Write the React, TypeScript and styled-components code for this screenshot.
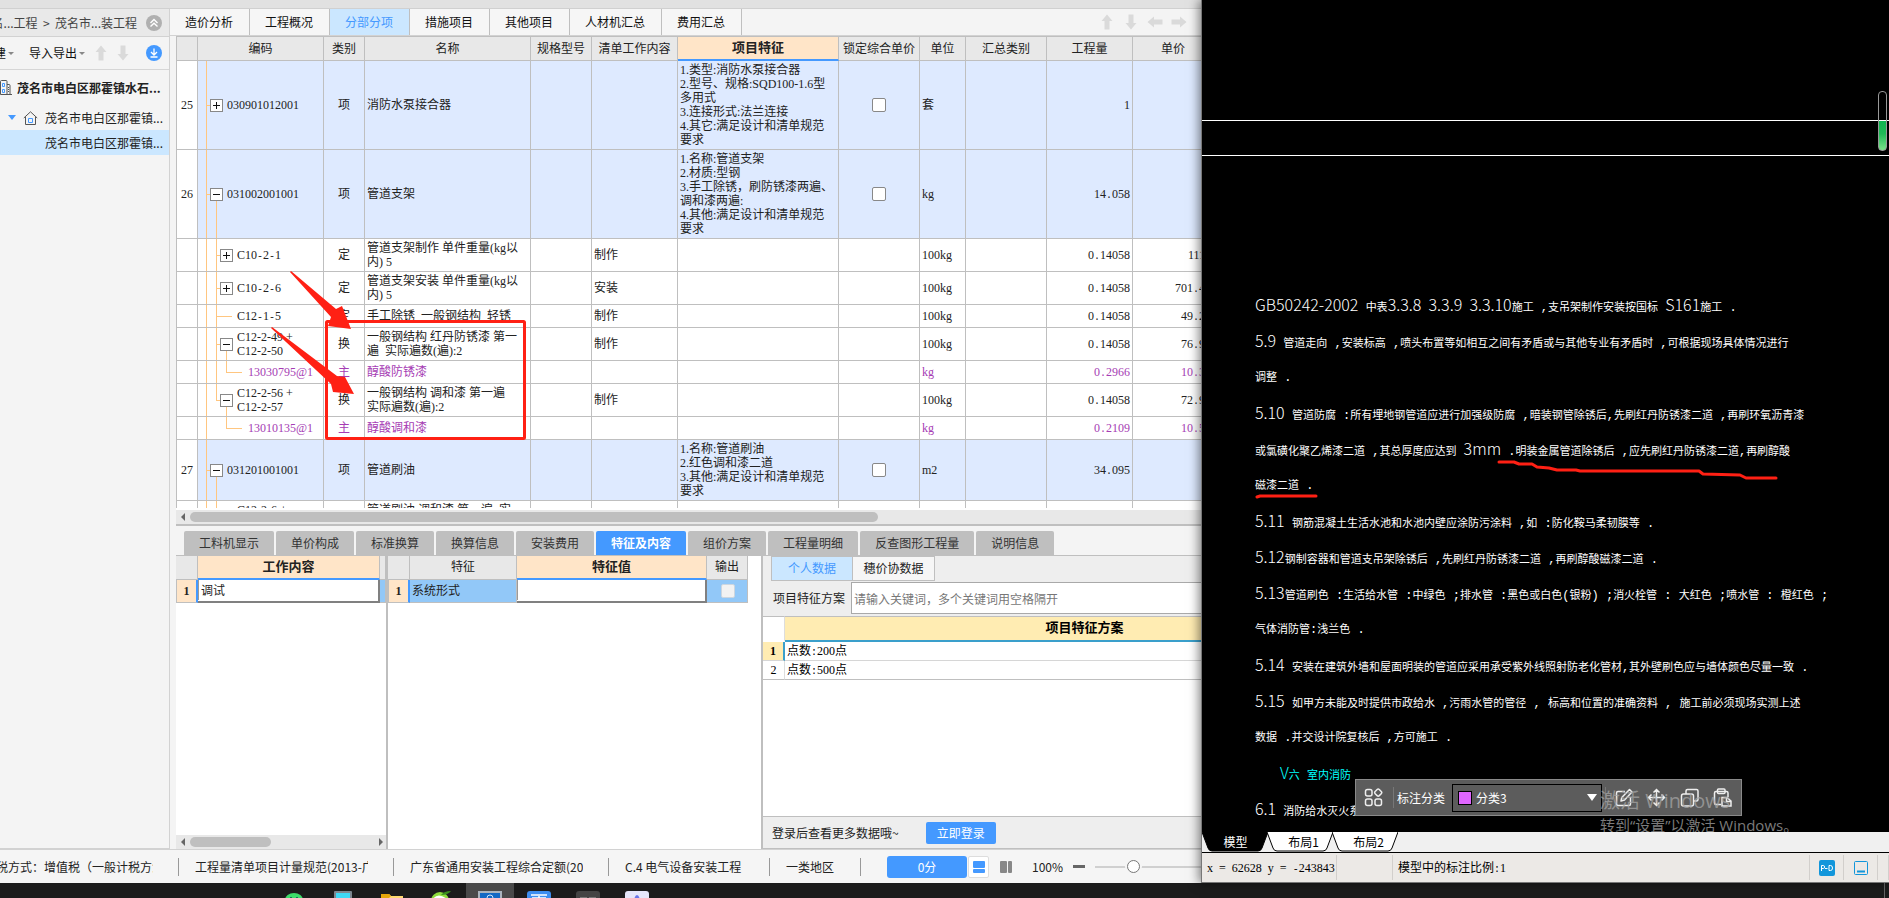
import React from "react";
import styled, { createGlobalStyle, css } from "styled-components";

const Global = createGlobalStyle`
  * { box-sizing: border-box; }
  html, body { margin: 0; height: 100%; overflow: hidden; }
  body { font: 12px/16px "Noto Sans CJK SC", sans-serif; color: #222; background: #1c1c1c; }
  #root { height: 100%; }
  button, input, select { font: inherit; color: inherit; margin: 0; padding: 0; border: 0; background: none; border-radius: 0; }
`;

const line = "#bfbfbf";
const blue = "#4499ff";
const gridFont = `12px/14px "Liberation Serif", "Noto Sans CJK SC", serif`;

const Screen = styled.div`
  height: 100vh;
  display: flex;
  flex-direction: column;
  overflow: hidden;
`;
const Windows = styled.div`
  flex: 1;
  min-height: 0;
  display: grid;
  grid-template-columns: minmax(0, 1201fr) minmax(0, 688fr);
`;

/* ---------- pricing application ---------- */
const AppWindow = styled.div`
  display: flex;
  flex-direction: column;
  min-height: 0;
  overflow: hidden;
  background: #f4f4f4;
`;
const TitleStrip = styled.div`
  flex: none;
  height: 9px;
  background: #e1e1e1;
  border-bottom: 1px solid #d0d0d0;
`;
const AppBody = styled.div`
  flex: 1;
  min-height: 0;
  display: flex;
`;

const Sidebar = styled.aside`
  flex: none;
  width: 170px;
  border-right: 1px solid #d2d2d2;
  border-bottom: 1px solid #d2d2d2;
  white-space: nowrap;
  overflow: hidden;
`;
const Crumbs = styled.nav`
  display: flex;
  align-items: center;
  justify-content: flex-end;
  height: 28px;
  padding: 0 7px 0 0;
  gap: 9px;
  background: #e9e9e9;
  border-bottom: 1px solid #d2d2d2;
  color: #444;
  span, svg { flex: none; }
`;
const SideTools = styled.div`
  display: flex;
  align-items: center;
  justify-content: flex-end;
  height: 33px;
  padding-right: 7px;
  border-bottom: 1px solid #d6d6d6;
  color: #111;
`;
const ToolButton = styled.button<{ $gap?: number }>`
  display: flex;
  flex: none;
  align-items: center;
  gap: 2px;
  margin-right: ${(p) => p.$gap ?? 0}px;
`;
const Caret = styled.span`
  border: 3px solid transparent;
  border-top-color: #888;
  border-bottom: 0;
`;
const TreeItem = styled.div<{ $pad: number; $top?: boolean; $on?: boolean }>`
  display: flex;
  align-items: center;
  gap: ${(p) => (p.$top ? 5 : 7)}px;
  height: ${(p) => (p.$top ? 35 : 25)}px;
  padding-left: ${(p) => p.$pad}px;
  font-weight: ${(p) => (p.$top ? 600 : 400)};
  background: ${(p) => (p.$on ? "#cbe7ff" : "transparent")};
`;
const Expander = styled.span`
  border: 4px solid transparent;
  border-top: 5px solid ${blue};
  border-bottom: 0;
`;

const Main = styled.main`
  flex: 1;
  min-width: 0;
  display: flex;
  flex-direction: column;
`;
const TopTabs = styled.div`
  flex: none;
  display: flex;
  height: 27px;
  border-bottom: 1px solid #d2d2d2;
`;
const TopTab = styled.button<{ $on?: boolean }>`
  padding: 0 16px 0 15px;
  border-right: 1px solid ${line};
  color: ${(p) => (p.$on ? blue : "#111")};
  background: ${(p) => (p.$on ? "#cbe7ff" : "#f6f6f6")};
`;
const MoveTools = styled.div`
  display: flex;
  align-items: center;
  gap: 8px;
  margin-left: auto;
  padding-right: 14px;
`;
const Workspace = styled.div`
  flex: 1;
  min-height: 0;
  display: flex;
  flex-direction: column;
  padding-left: 6px;
`;
const Upper = styled.section`
  flex: 489 1 0;
  min-height: 0;
  display: flex;
  flex-direction: column;
  position: relative;
  border-bottom: 2px solid ${line};
`;
const SheetView = styled.div`
  flex: 1;
  min-height: 0;
  overflow: hidden;
  background: #fff;
  border-bottom: 2px solid #fff;
`;
const Sheet = styled.table`
  width: 1038px;
  table-layout: fixed;
  border-collapse: separate;
  border-spacing: 0;
  border-left: 1px solid ${line};
  border-top: 1px solid ${line};
  font: ${gridFont};
`;
const Th = styled.th<{ $on?: boolean }>`
  height: 24px;
  padding: 0;
  white-space: nowrap;
  overflow: hidden;
  border-right: 1px solid ${line};
  border-bottom: ${(p) => (p.$on ? `2px solid ${blue}` : `1px solid ${line}`)};
  background: ${(p) => (p.$on ? "#ffe5c8" : "#e8e8e8")};
  font-weight: ${(p) => (p.$on ? 700 : 400)};
  font-size: ${(p) => (p.$on ? 13 : 12)}px;
`;
type Tone = "group" | "plain" | "material";
const Row = styled.tr<{ $h: number; $tone: Tone }>`
  height: ${(p) => p.$h}px;
  color: ${(p) => (p.$tone === "material" ? "#a63cb4" : "#222")};
  background: ${(p) => (p.$tone === "group" ? "#deeaff" : "#fff")};
`;
const Td = styled.td<{ $align?: string; $num?: boolean; $end?: number }>`
  position: relative;
  padding: 0 ${(p) => p.$end ?? 2}px 0 ${(p) => (p.$align ? 0 : 2)}px;
  border-right: 1px solid ${line};
  border-bottom: 1px solid ${line};
  white-space: pre;
  overflow: hidden;
  text-align: ${(p) => p.$align ?? "left"};
  ${(p) => p.$num && css`background: #fff;`}
`;
const CodeCell = styled.div<{ $pad: number }>`
  display: flex;
  align-items: center;
  gap: 4px;
  margin-left: -2px;
  padding-left: ${(p) => p.$pad}px;
`;
const Toggle = styled.button`
  position: relative;
  flex: none;
  width: 13px;
  height: 13px;
  background: #fff;
  border: 1px solid #888;
  svg { display: block; }
`;
const guide = "#ffc680";
const Guide = styled.i<{ $x: number; $part: "full" | "top" | "bottom" }>`
  position: absolute;
  left: ${(p) => p.$x}px;
  width: 1px;
  background: ${guide};
  top: ${(p) => (p.$part === "bottom" ? "calc(50% + 7px)" : "0")};
  bottom: ${(p) => (p.$part === "top" ? "50%" : "-1px")};
`;
const Stub = styled.i<{ $x: number; $w: number }>`
  position: absolute;
  left: ${(p) => p.$x}px;
  width: ${(p) => p.$w}px;
  top: 50%;
  height: 1px;
  background: ${guide};
`;
const Check = styled.input<{ $soft?: boolean }>`
  appearance: none;
  display: block;
  width: 14px;
  height: 14px;
  margin: 0 auto;
  background: ${(p) => (p.$soft ? "#f2f2f2" : "#fff")};
  border: 1px solid ${(p) => (p.$soft ? "#ccd6e0" : "#888")};
  border-radius: 2px;
`;
const Scroll = styled.div`
  flex: none;
  display: flex;
  align-items: center;
  height: 14px;
  padding: 0 3px 0 5px;
  background: #e8e8e8;
`;
const Thumb = styled.div<{ $w: string }>`
  width: ${(p) => p.$w};
  height: 10px;
  margin: 0 auto 0 5px;
  border-radius: 5px;
  background: ${line};
`;
const ScrollEnd = styled.span<{ $right?: boolean }>`
  border: 4px solid transparent;
  ${(p) =>
    p.$right
      ? css`border-left-color: #666; border-right: 0;`
      : css`border-right-color: #666; border-left: 0;`}
`;
const Marks = styled.svg`
  position: absolute;
  top: 0;
  left: 0;
  pointer-events: none;
`;

const Lower = styled.section`
  flex: 324 1 0;
  min-height: 0;
  display: flex;
  flex-direction: column;
`;
const DetailTabs = styled.div`
  flex: none;
  display: flex;
  gap: 2px;
  height: 30px;
  padding: 5px 0 0 8px;
  border-bottom: 1px solid ${line};
`;
const DetailTab = styled.button<{ $on?: boolean }>`
  flex: none;
  padding: 0 15px;
  border-radius: 2px 2px 0 0;
  background: ${(p) => (p.$on ? blue : line)};
  color: ${(p) => (p.$on ? "#fff" : "#333")};
  font-weight: ${(p) => (p.$on ? 600 : 400)};
`;
const Panels = styled.div`
  flex: 1;
  min-height: 0;
  display: flex;
`;
const Panel = styled.div<{ $w?: number }>`
  flex: ${(p) => (p.$w ? `0 0 ${p.$w}px` : "1 1 0")};
  min-width: 0;
  display: flex;
  flex-direction: column;
  overflow: hidden;
  background: ${(p) => (p.$w ? "#fff" : "#eee")};
  border-right: ${(p) => (p.$w ? `2px solid ${line}` : "0")};
`;
const MiniTable = styled.table<{ $w?: number }>`
  width: ${(p) => (p.$w ? `${p.$w}px` : "100%")};
  table-layout: fixed;
  border-collapse: separate;
  border-spacing: 0;
  font: ${gridFont};
`;
const MiniTd = styled.td<{ $kind?: "num" | "edit" | "sel" }>`
  height: 23px;
  padding: 0 0 0 2px;
  border-right: 1px solid ${line};
  border-bottom: 1px solid ${line};
  ${(p) => p.$kind === "sel" && css`background: #92c8f8;`}
  ${(p) =>
    p.$kind === "num" &&
    css`
      background: #ffe5c8;
      border-right: 2px solid ${blue};
      border-left: 1px solid ${line};
      text-align: center;
      font-weight: 700;
      padding: 0;
    `}
  ${(p) =>
    p.$kind === "edit" &&
    css`
      padding: 0;
      background: #fff;
      border-right: 2px solid #808080;
      border-bottom: 2px solid #808080;
    `}
`;
const CellInput = styled.input`
  display: block;
  width: 100%;
  height: 20px;
  padding: 0 2px;
  border-left: 1px solid #9a9a9a;
`;
const Spacer = styled.div`
  flex: 1;
  background: #fff;
`;
const SubTabs = styled.div`
  display: flex;
  padding: 0 0 0 8px;
  height: 25px;
`;
const SubTab = styled.button<{ $on?: boolean }>`
  width: 82px;
  border: 1px solid ${line};
  border-left-width: ${(p) => (p.$on ? 1 : 0)}px;
  background: ${(p) => (p.$on ? "#cbe7ff" : "#f6f6f6")};
  color: ${(p) => (p.$on ? blue : "#222")};
`;
const SearchRow = styled.label`
  display: flex;
  align-items: center;
  gap: 6px;
  height: 35px;
  padding-left: 10px;
  white-space: nowrap;
`;
const SearchInput = styled.input`
  flex: 1;
  min-width: 0;
  height: 32px;
  padding: 0 2px;
  background: #fff;
  border: 1px solid #a9a9a9;
  border-right: 0;
  &::placeholder { color: #777; opacity: 1; }
`;
const SchemeHead = styled.th<{ $blank?: boolean }>`
  height: 26px;
  padding: 0;
  border-top: 1px solid ${line};
  border-bottom: 2px solid ${(p) => (p.$blank ? "#fff" : "#3a9fcb")};
  border-right: 1px solid #ddd;
  background: ${(p) => (p.$blank ? "#fff" : "#ffecb2")};
  color: #000;
  font-size: 13px;
`;
const SchemeTd = styled.td<{ $num?: boolean; $on?: boolean }>`
  height: 19px;
  padding: 0 2px;
  color: #000;
  background: ${(p) => (p.$num && p.$on ? "#ffecb2" : "#fff")};
  border-bottom: 1px solid ${(p) => (p.$on ? "#d6d6d6" : line)};
  text-align: ${(p) => (p.$num ? "center" : "left")};
  border-right: ${(p) => (p.$num ? (p.$on ? "2px solid #3a9fcb" : "1px solid #ddd") : "0")};
  font-weight: ${(p) => (p.$num && p.$on ? 700 : 400)};
`;
const LoginBar = styled.div`
  display: flex;
  align-items: center;
  gap: 27px;
  height: 33px;
  padding: 0 0 0 9px;
  border-top: 1px solid ${line};
  border-bottom: 1px solid ${line};
`;
const LoginButton = styled.button`
  width: 70px;
  height: 22px;
  border-radius: 2px;
  background: ${blue};
  color: #fff;
`;

const StatusBar = styled.footer`
  flex: none;
  display: flex;
  align-items: center;
  height: 34px;
  border-top: 1px solid #d2d2d2;
  background: #f5f5f5;
  overflow: hidden;
  white-space: nowrap;
`;
const StatusItem = styled.div<{ $w: number; $first?: boolean }>`
  flex: none;
  width: ${(p) => p.$w}px;
  height: 18px;
  line-height: 18px;
  padding: 0 25px 0 ${(p) => (p.$first ? 0 : 16)}px;
  text-indent: ${(p) => (p.$first ? -4 : 0)}px;
  border-right: 1px solid #999;
  span { display: block; overflow: hidden; }
`;
const ScoreButton = styled.button`
  flex: none;
  width: 80px;
  height: 22px;
  margin-left: 26px;
  border-radius: 3px;
  background: ${blue};
  color: #fff;
`;
const ViewButton = styled.button<{ $on?: boolean }>`
  flex: none;
  display: flex;
  align-items: center;
  justify-content: center;
  width: 21px;
  height: 22px;
  margin: 0 5px 0 1px;
  border: 1px solid ${(p) => (p.$on ? "#ddd" : "transparent")};
  background: ${(p) => (p.$on ? "#fff" : "transparent")};
  border-radius: 2px;
`;
const Zoom = styled.div`
  display: flex;
  flex: none;
  align-items: center;
  gap: 10px;
  padding-left: 11px;
  button { width: 12px; height: 3px; background: #666; }
`;
const Slider = styled.input`
  appearance: none;
  width: 120px;
  height: 14px;
  background: linear-gradient(#d0d0d0, #d0d0d0) center / 100% 2px no-repeat;
  &::-webkit-slider-thumb {
    appearance: none;
    width: 13px;
    height: 13px;
    border-radius: 50%;
    background: #fff;
    border: 1px solid #777;
    box-shadow: 0 0 0 2px #f5f5f5;
  }
`;

/* ---------- drawing application ---------- */
const CadWindow = styled.div`
  position: relative;
  display: flex;
  flex-direction: column;
  min-height: 0;
  border-left: 1px solid #777;
  background: #000;
  box-shadow: -2px 0 10px rgba(0, 0, 0, 0.5);
`;
const Drawing = styled.div`
  position: relative;
  flex: 1;
  min-height: 0;
  overflow: hidden;
  color: #fff;
`;
const Rule = styled.div<{ $gap: number }>`
  height: 1px;
  margin-top: ${(p) => p.$gap}px;
  background: #fff;
`;
const Notes = styled.div`
  margin: 130px 0 0 53px;
  white-space: pre;
  font-size: 11px;
`;
const NoteLine = styled.p<{ $head?: boolean }>`
  margin: 0;
  height: 36px;
  line-height: 36px;
  padding-left: ${(p) => (p.$head ? 25 : 0)}px;
  color: ${(p) => (p.$head ? "#0ff" : "#fff")};
`;
const Word = styled.span`
  font-size: 16px;
  font-weight: 300;
`;
const Mark = styled.span`
  font: 12px "Liberation Mono", monospace;
`;
const Gauge = styled.div`
  position: absolute;
  top: 91px;
  right: 2px;
  width: 9px;
  height: 60px;
  border: 1px solid #999;
  border-radius: 4px;
  background: linear-gradient(transparent 50%, #10b450 50%, #1fb956 72%, #7be38a);
`;
const Floating = styled.div`
  position: absolute;
  right: 147px;
  bottom: 16px;
  display: flex;
  align-items: center;
  width: 387px;
  height: 37px;
  padding: 0 8px;
  border: 1px solid #8a8a8a;
  background: #5c5c5c;
  white-space: nowrap;
`;
const IconButton = styled.button`
  flex: none;
  width: 19px;
  height: 19px;
  svg { display: block; }
`;
const Divider = styled.i<{ $l: number; $r: number }>`
  width: 1px;
  height: 21px;
  margin: 0 ${(p) => p.$r}px 0 ${(p) => p.$l}px;
  background: #777;
`;
const FloatLabel = styled.label`
  margin-right: 7px;
`;
const SelectBox = styled.div`
  display: flex;
  align-items: center;
  width: 150px;
  height: 28px;
  padding: 0 4px 0 5px;
  border: 1px solid #000;
`;
const Swatch = styled.span`
  flex: none;
  width: 14px;
  height: 14px;
  border: 1px solid #000;
  background: #e066ff;
`;
const Select = styled.select`
  flex: 1;
  appearance: none;
  height: 26px;
  padding-left: 4px;
  outline: 0;
`;
const White = styled.span`
  border: 5px solid transparent;
  border-top: 7px solid #fff;
  border-bottom: 0;
`;
const IconSet = styled.div`
  display: flex;
  gap: 14px;
`;
const Watermark = styled.div`
  position: absolute;
  right: 94px;
  bottom: -3px;
  width: 195px;
  color: rgba(165, 165, 165, 0.75);
  font: 15px/20px "Open Sans", "Noto Sans CJK SC", sans-serif;
  white-space: nowrap;
  pointer-events: none;
  strong { display: block; font-size: 20px; line-height: 28px; font-weight: 400; }
`;
const CadTabs = styled.div`
  flex: none;
  display: flex;
  height: 20px;
  background: #f0f0f0;
`;
const CadTab = styled.button<{ $on?: boolean }>`
  position: relative;
  width: 65px;
  padding-left: ${(p) => (p.$on ? 2 : 8)}px;
  color: ${(p) => (p.$on ? "#fff" : "#000")};
  svg { position: absolute; left: 0; top: 0; }
  span { position: relative; }
`;
const CadStatus = styled.div`
  flex: none;
  display: flex;
  align-items: center;
  height: 31px;
  border-top: 1px solid #000;
  border-bottom: 1px solid #777;
  background: #ece9e6;
  color: #000;
  font: ${gridFont};
  white-space: pre;
`;
const CadField = styled.div<{ $w?: number; $center?: boolean }>`
  flex: ${(p) => (p.$w ? `0 0 ${p.$w}px` : "1")};
  display: flex;
  align-items: center;
  height: 25px;
  padding-left: ${(p) => (p.$center ? 0 : 5)}px;
  justify-content: ${(p) => (p.$center ? "center" : "flex-start")};
  border-right: 1px solid #d2cfcc;
`;
const HalfWidth = styled.span`
  font: 10px/10px "Liberation Mono", monospace;
`;

const Taskbar = styled.nav`
  flex: none;
  display: flex;
  gap: 1px;
  height: 15px;
  padding-left: 270px;
  overflow: hidden;
  background: #1c1c1c;
`;
const Task = styled.button<{ $on?: boolean }>`
  flex: none;
  display: flex;
  justify-content: center;
  width: 48px;
  height: 15px;
  padding-top: 8px;
  overflow: hidden;
  background: ${(p) => (p.$on ? "#4a4a4a" : "transparent")};
`;
const DesktopEdge = styled.i`
  width: 1px;
  margin: 0 4px 0 auto;
  background: #666;
`;

/* ---------- icons ---------- */
const Arrow = ({ dir, size = 16 }: { dir: number; size?: number }) => (
  <svg width={size} height={size} viewBox="0 0 16 16">
    <path d="M8 0.5 13.5 7H10.5v8.5h-5V7H2.5z" fill="#dadada" transform={`rotate(${dir} 8 8)`} />
  </svg>
);
const UpCircle = () => (
  <svg width="16" height="16" viewBox="0 0 16 16">
    <circle cx="8" cy="8" r="8" fill="#b0b0b0" />
    <path d="M4.5 8 8 4.6 11.5 8M4.5 11.6 8 8.2l3.5 3.4" fill="none" stroke="#fff" strokeWidth="1.4" />
  </svg>
);
const DownCircle = () => (
  <svg width="16" height="16" viewBox="0 0 16 16">
    <circle cx="8" cy="8" r="8" fill={blue} />
    <path d="M8 3.5v6.3M5 7l3 3 3-3M4.5 12h7" fill="none" stroke="#fff" strokeWidth="1.3" />
  </svg>
);
const Building = () => (
  <svg width="12" height="16" viewBox="0 0 12 16" fill="none" stroke="#555">
    <path d="M7 14.5H.5V1.5q0-1 1-1H6q1 0 1 1zM7 4.5h2q1 0 1 1v9M6.5 14.5H12M8 7.5h1M8 9.5h1M8 11.5h1" />
    <path d="M2.5 3.5h2v3h-2zM2.5 9.5h2v3h-2z" stroke={blue} />
  </svg>
);
const House = () => (
  <svg width="15" height="14" viewBox="0 0 15 14" fill="none" stroke="#555">
    <path d="M.8 7 7.5.8 14.2 7M2.5 6v7.5h10V6" />
    <path d="M5.5 7.5h4v4h-4z" stroke={blue} />
  </svg>
);

/* ---------- data ---------- */
type G = [number, "full" | "top" | "bottom"];
interface Item {
  no?: string; code: string; pad: number; box?: "+" | "-"; guides: G[]; stub: [number, number];
  type: string; name: string; work?: string; feature?: string; unit: string; qty: string; price?: string;
  h: number; tone: Tone;
}
const A: G = [8, "full"];
const B: G = [18, "full"];
const items: Item[] = [
  { no: "25", code: "030901012001", pad: 12, box: "+", guides: [A], stub: [8, 4], type: "项", name: "消防水泵接合器", feature: "1.类型:消防水泵接合器\n2.型号、规格:SQD100-1.6型\n多用式\n3.连接形式:法兰连接\n4.其它:满足设计和清单规范\n要求", unit: "套", qty: "1", h: 89, tone: "group" },
  { no: "26", code: "031002001001", pad: 12, box: "-", guides: [A, [18, "bottom"]], stub: [8, 4], type: "项", name: "管道支架", feature: "1.名称:管道支架\n2.材质:型钢\n3.手工除锈，刷防锈漆两遍、\n调和漆两遍:\n4.其他:满足设计和清单规范\n要求", unit: "kg", qty: "14.058", h: 89, tone: "group" },
  { code: "C10-2-1", pad: 22, box: "+", guides: [A, B], stub: [18, 4], type: "定", name: "管道支架制作 单件重量(kg以\n内) 5", work: "制作", unit: "100kg", qty: "0.14058", price: "111", h: 33, tone: "plain" },
  { code: "C10-2-6", pad: 22, box: "+", guides: [A, B], stub: [18, 4], type: "定", name: "管道支架安装 单件重量(kg以\n内) 5", work: "安装", unit: "100kg", qty: "0.14058", price: "701.4", h: 33, tone: "plain" },
  { code: "C12-1-5", pad: 39, guides: [A, B], stub: [18, 16], type: "定", name: "手工除锈 一般钢结构 轻锈", work: "制作", unit: "100kg", qty: "0.14058", price: "49.2", h: 23, tone: "plain" },
  { code: "C12-2-49 +\nC12-2-50", pad: 22, box: "-", guides: [A, B, [28, "bottom"]], stub: [18, 4], type: "换", name: "一般钢结构 红丹防锈漆 第一\n遍  实际遍数(遍):2", work: "制作", unit: "100kg", qty: "0.14058", price: "76.9", h: 33, tone: "plain" },
  { code: "13030795@1", pad: 50, guides: [A, B, [28, "top"]], stub: [28, 16], type: "主", name: "醇酸防锈漆", unit: "kg", qty: "0.2966", price: "10.3", h: 23, tone: "material" },
  { code: "C12-2-56 +\nC12-2-57", pad: 22, box: "-", guides: [A, [18, "top"], [28, "bottom"]], stub: [18, 4], type: "换", name: "一般钢结构 调和漆 第一遍\n实际遍数(遍):2", work: "制作", unit: "100kg", qty: "0.14058", price: "72.9", h: 33, tone: "plain" },
  { code: "13010135@1", pad: 50, guides: [A, [28, "top"]], stub: [28, 16], type: "主", name: "醇酸调和漆", unit: "kg", qty: "0.2109", price: "10.5", h: 23, tone: "material" },
  { no: "27", code: "031201001001", pad: 12, box: "-", guides: [A, [18, "bottom"]], stub: [8, 4], type: "项", name: "管道刷油", feature: "1.名称:管道刷油\n2.红色调和漆二道\n3.其他:满足设计和清单规范\n要求", unit: "m2", qty: "34.095", h: 61, tone: "group" },
  { code: "C12-2-6 +\nC12-2-7", pad: 39, guides: [A, B], stub: [18, 4], type: "", name: "管道刷油 调和漆 第一遍  实\n际遍数(遍):2", unit: "", qty: "", h: 33, tone: "plain" },
];
const widths = [21, 126, 41, 166, 61, 86, 161, 81, 46, 81, 86, 81];
const heads = ["", "编码", "类别", "名称", "规格型号", "清单工作内容", "项目特征", "锁定综合单价", "单位", "汇总类别", "工程量", "单价"];

const notes = [
  "GB50242-2002 中表3.3.8 3.3.9 3.3.10施工 ,支吊架制作安装按国标 S161施工 .",
  "5.9 管道走向 ,安装标高 ,喷头布置等如相互之间有矛盾或与其他专业有矛盾时 ,可根据现场具体情况进行",
  "调整 .",
  "5.10 管道防腐 :所有埋地钢管道应进行加强级防腐 ,暗装钢管除锈后,先刷红丹防锈漆二道 ,再刷环氧沥青漆",
  "或氯磺化聚乙烯漆二道 ,其总厚度应达到 3mm .明装金属管道除锈后 ,应先刷红丹防锈漆二道,再刷醇酸",
  "磁漆二道 .",
  "5.11 钢筋混凝土生活水池和水池内壁应涂防污涂料 ,如 :防化鞍马柔韧膜等 .",
  "5.12钢制容器和管道支吊架除锈后 ,先刷红丹防锈漆二道 ,再刷醇酸磁漆二道 .",
  "5.13管道刷色 :生活给水管 :中绿色 ;排水管 :黑色或白色(银粉) ;消火栓管 : 大红色 ;喷水管 : 橙红色 ;",
  "气体消防管:浅兰色 .",
  "5.14 安装在建筑外墙和屋面明装的管道应采用承受紫外线照射防老化管材,其外壁刷色应与墙体颜色尽量一致 .",
  "5.15 如甲方未能及时提供市政给水 ,污雨水管的管径 , 标高和位置的准确资料 , 施工前必须现场实测上述",
  "数据 .并交设计院复核后 ,方可施工 .",
  "V六 室内消防",
  "6.1 消防给水灭火系统",
];

/* drafting text: large light letters and figures, wide-set marks and blanks */
const Note = ({ text, head }: { text: string; head?: boolean }) => (
  <NoteLine $head={head}>
    {text.split(/([A-Za-z0-9][A-Za-z0-9.-]*|[ ,:;.()]+)/).map((t, i) =>
      i % 2 === 0 ? t : /^[A-Za-z0-9]/.test(t) ? <Word key={i}>{t}</Word> : <Mark key={i}>{t}</Mark>
    )}
  </NoteLine>
);

/* one-line grid text: blanks and marks take half the width of a Chinese character */
const GridText = ({ children = "" }: { children?: string }) => (
  <span>
    {children.includes("\n")
      ? children
      : children.split(/([ .:()+\-]+)/).map((t, i) => (i % 2 ? <HalfWidth key={i}>{t}</HalfWidth> : t))}
  </span>
);

const detailTabs = ["工料机显示", "单价构成", "标准换算", "换算信息", "安装费用", "特征及内容", "组价方案", "工程量明细", "反查图形工程量", "说明信息"];

export default function App() {
  return (
    <Screen>
      <Global />
      <Windows>
        <AppWindow>
          <TitleStrip />
          <AppBody>
            <Sidebar>
              <Crumbs>
                <span>名...工程 &nbsp;&gt;&nbsp; 茂名市...装工程</span>
                <UpCircle />
              </Crumbs>
              <SideTools>
                <ToolButton $gap={15}>新建<Caret /></ToolButton>
                <ToolButton $gap={8}>导入导出<Caret /></ToolButton>
                <ToolButton $gap={6} aria-label="上移"><Arrow dir={0} /></ToolButton>
                <ToolButton $gap={15} aria-label="下移"><Arrow dir={180} /></ToolButton>
                <ToolButton aria-label="下载"><DownCircle /></ToolButton>
              </SideTools>
              <TreeItem $pad={0} $top><Building />茂名市电白区那霍镇水石...</TreeItem>
              <TreeItem $pad={8}><Expander /><House />茂名市电白区那霍镇...</TreeItem>
              <TreeItem $pad={45} $on>茂名市电白区那霍镇...</TreeItem>
            </Sidebar>
            <Main>
              <TopTabs>
                {["造价分析", "工程概况", "分部分项", "措施项目", "其他项目", "人材机汇总", "费用汇总"].map((t) => (
                  <TopTab key={t} $on={t === "分部分项"}>{t}</TopTab>
                ))}
                <MoveTools>
                  {[0, 180, 270, 90].map((d) => <Arrow key={d} dir={d} />)}
                </MoveTools>
              </TopTabs>
              <Workspace>
                <Upper>
                  <SheetView>
                    <Sheet>
                      <colgroup>{widths.map((w, i) => <col key={i} width={w} />)}</colgroup>
                      <thead>
                        <tr>{heads.map((h, i) => <Th key={i} $on={i === 6}>{h}</Th>)}</tr>
                      </thead>
                      <tbody>
                        {items.map((r) => (
                          <Row key={r.code} $h={r.h} $tone={r.tone}>
                            <Td $num $align="center" $end={0}>{r.no}</Td>
                            <Td>
                              {r.guides.map(([x, part]) => <Guide key={x} $x={x} $part={part} />)}
                              <Stub $x={r.stub[0]} $w={r.stub[1]} />
                              <CodeCell $pad={r.pad}>
                                {r.box && (
                                  <Toggle aria-label="展开">
                                    <svg width="11" height="11" stroke="#111" fill="none">
                                      <path d={r.box === "+" ? "M2 5.5h7M5.5 2v7" : "M2 5.5h7"} />
                                    </svg>
                                  </Toggle>
                                )}
                                <GridText>{r.code}</GridText>
                              </CodeCell>
                            </Td>
                            <Td $align="center" $end={0}>{r.type}</Td>
                            <Td><GridText>{r.name}</GridText></Td>
                            <Td />
                            <Td>{r.work}</Td>
                            <Td>{r.feature}</Td>
                            <Td $align="center" $end={0}>{r.feature && <Check type="checkbox" aria-label="锁定综合单价" />}</Td>
                            <Td>{r.unit}</Td>
                            <Td />
                            <Td $align="right"><GridText>{r.qty}</GridText></Td>
                            <Td $align="right" $end={8}><GridText>{r.price}</GridText></Td>
                          </Row>
                        ))}
                      </tbody>
                    </Sheet>
                  </SheetView>
                  <Scroll><ScrollEnd /><Thumb $w="688px" /></Scroll>
                  <Marks width="370" height="420" viewBox="176 36 370 420">
                    <rect x="326.5" y="321.5" width="198" height="117" rx="1" fill="none" stroke="#ff2014" strokeWidth="3" />
                    <path d="M291 271 336 309 342 306 351 329 328 326 331 317 290 272z" fill="#ff2014" />
                    <path d="M272 327 337 376 345 377 354 394 333 392 331 384 271 328z" fill="#ff2014" />
                  </Marks>
                </Upper>
                <Lower>
                  <DetailTabs>
                    {detailTabs.map((t) => <DetailTab key={t} $on={t === "特征及内容"}>{t}</DetailTab>)}
                  </DetailTabs>
                  <Panels>
                    <Panel $w={212}>
                      <MiniTable>
                        <colgroup><col width="22" /><col width="182" /><col /></colgroup>
                        <thead><tr><Th /><Th $on>工作内容</Th><Th /></tr></thead>
                        <tbody>
                          <tr>
                            <MiniTd $kind="num">1</MiniTd>
                            <MiniTd $kind="edit"><CellInput aria-label="工作内容" defaultValue="调试" /></MiniTd>
                            <MiniTd $kind="sel" />
                          </tr>
                        </tbody>
                      </MiniTable>
                      <Spacer />
                      <Scroll><ScrollEnd /><Thumb $w="81px" /><ScrollEnd $right /></Scroll>
                    </Panel>
                    <Panel $w={375}>
                      <MiniTable $w={360}>
                        <colgroup><col width="22" /><col width="107" /><col width="190" /><col width="41" /></colgroup>
                        <thead><tr><Th /><Th>特征</Th><Th $on>特征值</Th><Th>输出</Th></tr></thead>
                        <tbody>
                          <tr>
                            <MiniTd $kind="num">1</MiniTd>
                            <MiniTd $kind="sel">系统形式</MiniTd>
                            <MiniTd $kind="edit"><CellInput aria-label="特征值" /></MiniTd>
                            <MiniTd $kind="sel"><Check $soft type="checkbox" aria-label="输出" /></MiniTd>
                          </tr>
                        </tbody>
                      </MiniTable>
                    </Panel>
                    <Panel>
                      <SubTabs>
                        <SubTab $on>个人数据</SubTab>
                        <SubTab>穗价协数据</SubTab>
                      </SubTabs>
                      <SearchRow>
                        项目特征方案
                        <SearchInput placeholder="请输入关键词，多个关键词用空格隔开" />
                      </SearchRow>
                      <MiniTable $w={622}>
                        <colgroup><col width="22" /><col /></colgroup>
                        <thead><tr><SchemeHead $blank /><SchemeHead>项目特征方案</SchemeHead></tr></thead>
                        <tbody>
                          <tr><SchemeTd $num $on>1</SchemeTd><SchemeTd $on><GridText>点数:200点</GridText></SchemeTd></tr>
                          <tr><SchemeTd $num>2</SchemeTd><SchemeTd><GridText>点数:500点</GridText></SchemeTd></tr>
                        </tbody>
                      </MiniTable>
                      <Spacer />
                      <LoginBar>登录后查看更多数据哦~<LoginButton>立即登录</LoginButton></LoginBar>
                    </Panel>
                  </Panels>
                </Lower>
              </Workspace>
            </Main>
          </AppBody>
          <StatusBar>
            <StatusItem $w={179} $first><span>税方式：增值税（一般计税方法）</span></StatusItem>
            <StatusItem $w={215}><span>工程量清单项目计量规范(2013-广东)</span></StatusItem>
            <StatusItem $w={215}><span>广东省通用安装工程综合定额(2018)</span></StatusItem>
            <StatusItem $w={161}><span>C.4 电气设备安装工程</span></StatusItem>
            <StatusItem $w={91}><span>一类地区</span></StatusItem>
            <ScoreButton>0分</ScoreButton>
            <ViewButton $on aria-label="上下布局">
              <svg width="12" height="12" fill={blue}><rect width="12" height="7" rx="1" /><rect y="8" width="12" height="4" rx="1" /></svg>
            </ViewButton>
            <ViewButton aria-label="左右布局">
              <svg width="12" height="12" fill="#888"><rect width="7" height="12" rx="1" /><rect x="8" width="4" height="12" rx="1" /></svg>
            </ViewButton>
            <Zoom>
              100%
              <button aria-label="缩小" />
              <Slider type="range" aria-label="缩放" defaultValue={30} />
            </Zoom>
          </StatusBar>
        </AppWindow>

        <CadWindow>
          <Drawing>
            <Rule $gap={120} />
            <Rule $gap={34} />
            <Notes>{notes.map((n) => <Note key={n} text={n} head={n.startsWith("V")} />)}</Notes>
            <Marks width="640" height="520" viewBox="1202 0 640 520" fill="none" stroke="#ff2014" strokeWidth="3" strokeLinecap="round" strokeLinejoin="round">
              <path d="M1499 462h15l5 2h13l5 3 12 1 8 2h19l4 1h119l4 3 37 1 6 3h30" />
              <path d="M1257 497l3-1h56" />
            </Marks>
            <Gauge />
            <Floating>
              <IconButton aria-label="全部分类">
                <svg width="19" height="19" fill="none" stroke="#eee" strokeWidth="1.5">
                  <rect x="1.5" y="1.5" width="6.5" height="6.5" rx="2" />
                  <rect x="1.5" y="11" width="6.5" height="6.5" rx="2" />
                  <rect x="11" y="11" width="6.5" height="6.5" rx="2" />
                  <rect x="11.3" y="1.7" width="5.8" height="5.8" rx="1.5" transform="rotate(45 14.2 4.6)" />
                </svg>
              </IconButton>
              <Divider $l={10} $r={3} />
              <FloatLabel htmlFor="kind">标注分类</FloatLabel>
              <SelectBox>
                <Swatch />
                <Select id="kind"><option>分类3</option></Select>
                <White />
              </SelectBox>
              <Divider $l={3} $r={8} />
              <IconSet>
                <IconButton aria-label="编辑">
                  <svg width="19" height="19" fill="none" stroke="#eee" strokeWidth="1.5" strokeLinejoin="round">
                    <path d="M11 3.5H4q-1.5 0-1.5 1.5v11q0 1.5 1.5 1.5h11q1.5 0 1.5-1.5V9" />
                    <path d="M7 13l.8-3.5L15.5 1.5l2.5 2.5-7.5 8z" />
                  </svg>
                </IconButton>
                <IconButton aria-label="移动">
                  <svg width="19" height="19" fill="none" stroke="#eee" strokeWidth="1.5">
                    <path d="M9.5 1.5v16M1.5 9.5h16M6.5 4.5l3-3 3 3M6.5 14.5l3 3 3-3M4.5 6.5l-3 3 3 3M14.5 6.5l3 3-3 3" />
                  </svg>
                </IconButton>
                <IconButton aria-label="复制">
                  <svg width="19" height="19" fill="none" stroke="#eee" strokeWidth="1.5">
                    <rect x="1.5" y="6" width="12" height="12" rx="2" />
                    <path d="M6 6V3q0-1.5 1.5-1.5h9q1.5 0 1.5 1.5v8.5q0 1.5-1.5 1.5h-3" />
                  </svg>
                </IconButton>
                <IconButton aria-label="粘贴">
                  <svg width="19" height="19" fill="none" stroke="#eee" strokeWidth="1.5">
                    <path d="M8 16.5H3q-1.5 0-1.5-1.5V5q0-1.5 1.5-1.5h10.5q1.5 0 1.5 1.5v4" />
                    <rect x="4.5" y="1" width="7.5" height="4.5" rx="1" />
                    <path d="M9 9.5h5l4 3.5v5H9zM13.5 10v3.5H18" />
                  </svg>
                </IconButton>
              </IconSet>
            </Floating>
            <Watermark><strong>激活 Windows</strong>转到“设置”以激活 Windows。</Watermark>
          </Drawing>
          <CadTabs>
            {["模型", "布局1", "布局2"].map((t, i) => (
              <CadTab key={t} $on={i === 0}>
                <svg width="66" height="20" viewBox="0 0 66 20">
                  <path d="M0 0 6 16q1 3 4 3h46q3 0 4-3L66 0z" fill={i ? "#fff" : "#000"} />
                  <path d="M0 0 6 16q1 3 4 3h46q3 0 4-3L66 0" fill="none" stroke="#000" />
                </svg>
                <span>{t}</span>
              </CadTab>
            ))}
          </CadTabs>
          <CadStatus>
            <CadField $w={135}><GridText>x = 62628 y = -243843</GridText></CadField>
            <CadField $w={56} />
            <CadField><GridText>模型中的标注比例:1</GridText></CadField>
            <CadField $w={34} $center>
              <svg width="16" height="16" viewBox="0 0 16 16">
                <rect width="16" height="16" rx="2" fill="#1296db" />
                <path d="M2.5 11V5.5h2q1 0 1 1.5t-1 1.5h-2M6 8.5h2.5M10 5.5h1.5q2 0 2 2.5t-2 2.5H10z" fill="none" stroke="#fff" />
              </svg>
            </CadField>
            <CadField $w={34} $center>
              <svg width="14" height="14" fill="none" stroke="#1296db"><rect x=".5" y=".5" width="13" height="13" rx="1" /><path d="M3 10.5h8" strokeWidth="2" /></svg>
            </CadField>
            <CadField $w={11} $center />
          </CadStatus>
        </CadWindow>
      </Windows>
      <Taskbar>
        <Task aria-label="微信">
          <svg width="18" height="16"><ellipse cx="9" cy="9" rx="9" ry="7" fill="#3ddc6a" /><circle cx="6" cy="7" r="1" fill="#145" /><circle cx="12" cy="7" r="1" fill="#145" /></svg>
        </Task>
        <Task aria-label="计算器">
          <svg width="18" height="16"><rect width="18" height="16" rx="1" fill="#7d8790" /><rect x="2" y="2" width="14" height="5" fill="#3fd8f5" /></svg>
        </Task>
        <Task aria-label="文件">
          <svg width="22" height="16"><path d="M0 3h8l2 2h12v11H0z" fill="#ffd970" /><path d="M0 3h8l2 2-2 2H0z" fill="#e5a50a" /></svg>
        </Task>
        <Task aria-label="浏览器">
          <svg width="20" height="16"><circle cx="9" cy="10" r="9" fill="#8fdc3c" /><path d="M3 9q4-6 12 0" stroke="#fff" strokeWidth="3" fill="none" /><path d="M10 4q3-4 10-4-3 4-10 4z" fill="#3a8f1c" /></svg>
        </Task>
        <Task $on aria-label="远程">
          <svg width="24" height="16"><rect width="24" height="16" fill="#aab4be" /><rect x="2" y="2" width="20" height="14" fill="#1268c4" /><circle cx="12" cy="7" r="3" fill="none" stroke="#cfe4fa" /></svg>
        </Task>
        <Task aria-label="计价">
          <svg width="24" height="16"><rect width="24" height="16" rx="3" fill="#3d8df0" /><path d="M4 4h7M13 4h7M5 7h14M12 3v5" stroke="#fff" strokeWidth="1.5" /></svg>
        </Task>
        <Task aria-label="工具">
          <svg width="24" height="16"><rect width="24" height="16" rx="3" fill="#444" /><path d="M4 7h7M13 7h7" stroke="#888" strokeWidth="1.5" /></svg>
        </Task>
        <Task aria-label="助手">
          <svg width="24" height="16"><rect width="24" height="16" rx="3" fill="#e6e6fa" /><path d="M8 16q1-12 4-12t4 12z" fill="#6a74e8" /></svg>
        </Task>
        <DesktopEdge />
      </Taskbar>
    </Screen>
  );
}
